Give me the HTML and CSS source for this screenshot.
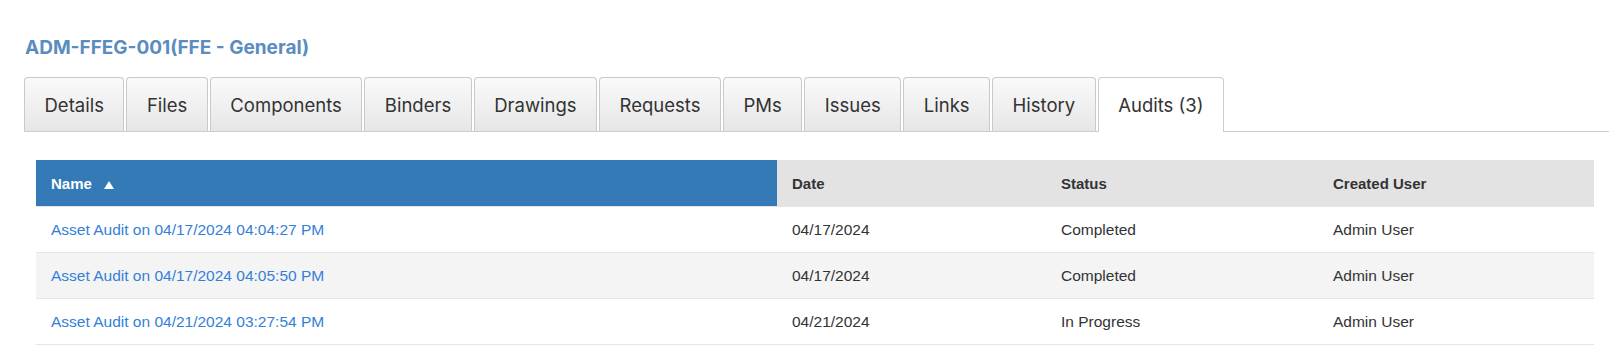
FILE: index.html
```html
<!DOCTYPE html>
<html lang="en">
<head>
<meta charset="utf-8">
<title>ADM-FFEG-001 Audits</title>
<link rel="stylesheet" href="styles.css">
</head>
<body>
<div class="page">
  <h1 class="asset-title">ADM-FFEG-001(FFE - General)</h1>
  <ul class="tabs">
    <li class="tab">Details</li>
    <li class="tab">Files</li>
    <li class="tab">Components</li>
    <li class="tab">Binders</li>
    <li class="tab">Drawings</li>
    <li class="tab">Requests</li>
    <li class="tab">PMs</li>
    <li class="tab">Issues</li>
    <li class="tab">Links</li>
    <li class="tab">History</li>
    <li class="tab active">Audits (3)</li>
  </ul>
  <div class="panel">
    <table class="grid">
      <colgroup>
        <col class="c-name">
        <col class="c-date">
        <col class="c-status">
        <col class="c-user">
      </colgroup>
      <thead>
        <tr>
          <th class="sorted">Name <svg class="sort-icon" width="10" height="8" viewBox="0 0 10 8"><path d="M0 8 L5 0 L10 8 Z" fill="#fff"/></svg></th>
          <th>Date</th>
          <th>Status</th>
          <th>Created User</th>
        </tr>
      </thead>
      <tbody>
        <tr>
          <td><a href="#" class="link">Asset Audit on 04/17/2024 04:04:27 PM</a></td>
          <td>04/17/2024</td>
          <td>Completed</td>
          <td>Admin User</td>
        </tr>
        <tr class="alt">
          <td><a href="#" class="link">Asset Audit on 04/17/2024 04:05:50 PM</a></td>
          <td>04/17/2024</td>
          <td>Completed</td>
          <td>Admin User</td>
        </tr>
        <tr>
          <td><a href="#" class="link">Asset Audit on 04/21/2024 03:27:54 PM</a></td>
          <td>04/21/2024</td>
          <td>In Progress</td>
          <td>Admin User</td>
        </tr>
      </tbody>
    </table>
  </div>
</div>
</body>
</html>
```
FILE: styles.css
```css
html, body {
  margin: 0;
  padding: 0;
  background: #fff;
}

.page {
  padding-top: 36px;
}

.asset-title {
  margin: 0 0 17px 25px;
  font-family: Inter, "Liberation Sans", sans-serif;
  font-weight: 700;
  font-size: 19px;
  line-height: 24px;
  color: #5b8cbf;
}

.tabs {
  list-style: none;
  margin: 0 0 0 24px;
  padding: 0;
  display: flex;
  align-items: flex-end;
  gap: 2px;
  border-bottom: 1px solid #cccccc;
}

.tab {
  box-sizing: border-box;
  height: 54px;
  padding: 0 19.5px;
  display: flex;
  align-items: center;
  border: 1px solid #c9c9c9;
  border-bottom: none;
  border-radius: 4px 4px 0 0;
  background: linear-gradient(#fafafa, #e6e6e6);
  font-family: Inter, "Liberation Sans", sans-serif;
  font-size: 18.5px;
  color: #333;
  white-space: nowrap;
}

.tab.active {
  height: 55px;
  margin-bottom: -1px;
  background: #fff;
  border-color: #cccccc;
}

.panel {
  padding: 28px 15px 0 36px;
}

.grid {
  width: 100%;
  border-collapse: collapse;
  table-layout: fixed;
  font-family: "Liberation Sans", Arial, sans-serif;
  font-size: 15.5px;
  color: #333;
}

.c-name { width: 741px; }
.c-date { width: 269px; }
.c-status { width: 272px; }
.c-user { width: 276px; }

.grid th {
  height: 46px;
  padding: 0 15px;
  text-align: left;
  font-weight: 700;
  font-size: 15px;
  background: #e3e3e3;
  color: #333;
}

.grid th.sorted {
  background: #337ab7;
  color: #fff;
}

.sort-icon {
  margin-left: 8px;
  vertical-align: 0px;
}

.grid td {
  height: 45px;
  padding: 0 15px;
  border-top: 1px solid #e5e5e5;
  white-space: nowrap;
}

.grid tbody tr:last-child td {
  border-bottom: 1px solid #e5e5e5;
}

.grid tr.alt td {
  background: #f4f4f4;
}

.link {
  color: #3480d8;
  text-decoration: none;
}
```
